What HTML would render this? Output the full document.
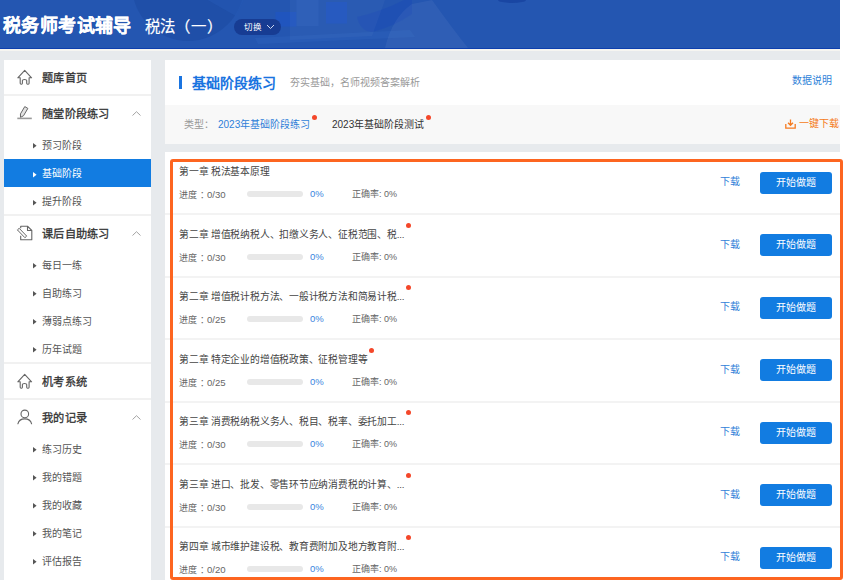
<!DOCTYPE html>
<html lang="zh-CN"><head><meta charset="utf-8">
<style>
*{margin:0;padding:0;box-sizing:border-box}
html,body{width:843px;height:580px;overflow:hidden;background:#fff}
body{font-family:"Liberation Sans",sans-serif;position:relative}
.abs{position:absolute}
#bg{position:absolute;left:0;top:0;width:840px;height:580px;background:#e7eaed}
#hdr{position:absolute;left:0;top:0;width:840px;height:49px;background:#2456b1;overflow:hidden}
#hdrline{position:absolute;left:0;top:48px;width:840px;height:1px;background:#0d3fae}
#hdrcream{position:absolute;left:0;top:49px;width:840px;height:2px;background:#f6f5f1}
.t{position:absolute;white-space:nowrap;line-height:1}
#side{position:absolute;left:4px;top:60px;width:147px;height:520px;background:#fff}
.div{position:absolute;left:0;width:147px;height:2px;background:#f1f1f1}
.mi{position:absolute;left:38px;font-size:11.2px;letter-spacing:0.3px;color:#333;line-height:1;-webkit-text-stroke:0.3px #333}
.si{position:absolute;left:38px;font-size:10px;color:#555;line-height:1;margin-top:0.6px}
.tri{position:absolute;left:28.8px;width:4px;height:6px}
.chev{position:absolute;left:128px;width:9px;height:5px}
#sel{position:absolute;left:0;top:99px;width:147px;height:28px;background:#127ce1}
#panel{position:absolute;left:165px;top:60px;width:678px;height:45px;background:#fff}
#typ{position:absolute;left:165px;top:105px;width:675px;height:39px;background:#f8f8f8}
#list{position:absolute;left:165px;top:152px;width:678px;height:428px;background:#fff}
.row{position:absolute;left:0;width:675px;height:62.5px}
.rdiv{position:absolute;left:0;bottom:-0.5px;width:675px;height:2px;background:#f3f3f3}
.title{position:absolute;left:14px;top:15.2px;font-size:9.75px;letter-spacing:-0.22px;color:#444;line-height:1;white-space:nowrap}
.prog{position:absolute;left:14px;top:38px;font-size:9px;color:#666;line-height:1;white-space:nowrap}
.bar{position:absolute;left:82px;top:39px;width:56px;height:6px;border-radius:3px;background:#e8e8e8}
.pct{position:absolute;left:145px;top:37.2px;font-size:9.5px;color:#3b86e0;line-height:1}
.acc{position:absolute;left:187px;top:38px;font-size:9px;color:#666;line-height:1;white-space:nowrap}
.dl{position:absolute;left:555px;top:25.3px;font-size:10px;color:#2f7fd8;line-height:1}
.btn{position:absolute;left:595px;top:19.5px;width:72px;height:22px;border-radius:3px;background:#127ce1;color:#fff;font-size:10px;line-height:22px;text-align:center}
.dot{position:absolute;width:5px;height:5px;border-radius:50%;background:#f4472a}
#orange{position:absolute;left:170px;top:159px;width:673px;height:421px;border:3px solid #fd6520;border-radius:3px}
</style></head><body>
<div id="bg"></div>
<div id="hdr"><svg class="abs" style="left:0;top:0" width="840" height="48" viewBox="0 0 840 48">
<circle cx="188" cy="-15" r="56" fill="#1f4fa8"/>
<path d="M206 -1 L188 -15 L244 0 L236 16 Z" fill="#2458b4" opacity="0.6"/>
<rect x="275.5" y="12" width="21" height="14.5" fill="#1f55c2" opacity="0.8"/>
<rect x="296.5" y="0" width="22" height="26" fill="#2a5cb8" opacity="0.8"/>
<rect x="326" y="2" width="21" height="21.5" fill="#1f55c2" opacity="0.8"/>
<path d="M255 38 L410 30 L415 37 L258 44 Z" fill="#2b5eb8" opacity="0.7"/>
<path d="M357 17 Q380 12 404 0 L412 0 L412 14 Q395 26 372 32 Q360 31 357 17 Z" fill="#1f50b4" opacity="0.9"/>
<path d="M290 0 H385 L372 36 L290 40 Z" fill="#fff" opacity="0.03"/><path d="M385 48 Q392 18 412 4 L432 0 Q452 28 468 48 Z" fill="#fff" opacity="0.05"/><ellipse cx="512" cy="0" rx="14" ry="3" fill="#123c9a" opacity="0.6"/>
</svg></div>
<div id="hdrline"></div>
<div id="hdrcream"></div>
<div class="t" style="left:3px;top:17px;font-size:18px;letter-spacing:0.4px;font-weight:bold;color:#fff;-webkit-text-stroke:0.2px #fff">税务师考试辅导</div>
<div class="t" style="left:145px;top:18.5px;font-size:15.4px;color:#fff;-webkit-text-stroke:0.2px #fff">税法<span style="letter-spacing:1px">（一）</span></div>
<div class="abs" style="left:234px;top:18.5px;width:47px;height:16px;border-radius:8px;background:#173c93"></div>
<div class="t" style="left:244px;top:22.5px;font-size:8.5px;color:#fff">切换</div>
<svg class="abs" style="left:266px;top:24px" width="9" height="6" viewBox="0 0 9 6"><path d="M1 1 L4.5 4.5 L8 1" fill="none" stroke="#cfd8ee" stroke-width="1"/></svg>

<div id="side">
  <!-- 题库首页 row 60-95 -->
  <svg class="abs" style="left:12px;top:8px" width="18" height="18" viewBox="0 0 18 18"><path d="M4.2 15.3 V9.8 H1.8 L8.7 2.4 L15.6 9.8 H13.1 V15.3 Q13.1 16.2 12.2 16.2 H11.6 Q10.7 16.2 10.7 15.3 V12.6 Q10.7 11.5 8.55 11.5 Q6.4 11.5 6.4 12.6 V15.3 Q6.4 16.2 5.5 16.2 H5.1 Q4.2 16.2 4.2 15.3 Z" fill="none" stroke="#666" stroke-width="1.1" stroke-linejoin="round"/></svg>
  <div class="mi" style="top:13px">题库首页</div>
  <div class="div" style="top:34px"></div>
  <!-- 随堂阶段练习 96-131 -->
  <svg class="abs" style="left:12px;top:42px" width="18" height="18" viewBox="0 0 18 18"><path d="M8.75 4.6 L11.85 6.4 L7.55 13.7 L4.5 15.4 L4.45 11.9 Z" fill="#e2e2e2" stroke="#666" stroke-width="1" stroke-linejoin="round"/><path d="M1.3 16.4 H15.8" stroke="#9a9a9a" stroke-width="1.6"/></svg>
  <div class="mi" style="top:49px">随堂阶段练习</div>
  <svg class="chev" style="top:51px" viewBox="0 0 9 5"><path d="M0.5 4.5 L4.5 0.7 L8.5 4.5" fill="none" stroke="#999" stroke-width="0.9"/></svg>
  <svg class="tri" style="top:83px" viewBox="0 0 4 6"><path d="M0 0.1 L3.6 2.85 L0 5.6 Z" fill="#555"/></svg>
  <div class="si" style="top:80px">预习阶段</div>
  <div id="sel"></div>
  <svg class="tri" style="top:111.5px" viewBox="0 0 4 6"><path d="M0 0.1 L3.6 2.85 L0 5.6 Z" fill="#fff"/></svg>
  <div class="si" style="top:108.5px;color:#fff">基础阶段</div>
  <svg class="tri" style="top:139.5px" viewBox="0 0 4 6"><path d="M0 0.1 L3.6 2.85 L0 5.6 Z" fill="#555"/></svg>
  <div class="si" style="top:136.5px">提升阶段</div>
  <div class="div" style="top:154px"></div>
  <!-- 课后自助练习 216-251 -->
  <svg class="abs" style="left:12px;top:163px" width="18" height="18" viewBox="0 0 18 18"><path d="M4.7 5.2 V3.2 H11.5 L15.8 7.5 V16.8 H4.7 V12.7 M11.5 3.2 V7.5 H15.8" fill="none" stroke="#666" stroke-width="1.1" stroke-linejoin="round"/><path d="M3.2 5.3 L10.7 13.1 L8.9 14.7 L1.4 6.9 Z" fill="none" stroke="#666" stroke-width="1" stroke-linejoin="round"/></svg>
  <div class="mi" style="top:169px">课后自助练习</div>
  <svg class="chev" style="top:171px" viewBox="0 0 9 5"><path d="M0.5 4.5 L4.5 0.7 L8.5 4.5" fill="none" stroke="#999" stroke-width="0.9"/></svg>
  <svg class="tri" style="top:203px" viewBox="0 0 4 6"><path d="M0 0.1 L3.6 2.85 L0 5.6 Z" fill="#555"/></svg>
  <div class="si" style="top:200px">每日一练</div>
  <svg class="tri" style="top:231px" viewBox="0 0 4 6"><path d="M0 0.1 L3.6 2.85 L0 5.6 Z" fill="#555"/></svg>
  <div class="si" style="top:228px">自助练习</div>
  <svg class="tri" style="top:259px" viewBox="0 0 4 6"><path d="M0 0.1 L3.6 2.85 L0 5.6 Z" fill="#555"/></svg>
  <div class="si" style="top:256px">薄弱点练习</div>
  <svg class="tri" style="top:287px" viewBox="0 0 4 6"><path d="M0 0.1 L3.6 2.85 L0 5.6 Z" fill="#555"/></svg>
  <div class="si" style="top:284px">历年试题</div>
  <div class="div" style="top:302px"></div>
  <!-- 机考系统 364-399 -->
  <svg class="abs" style="left:12px;top:312px" width="18" height="18" viewBox="0 0 18 18"><path d="M4.2 15.3 V9.8 H1.8 L8.7 2.4 L15.6 9.8 H13.1 V15.3 Q13.1 16.2 12.2 16.2 H11.6 Q10.7 16.2 10.7 15.3 V12.6 Q10.7 11.5 8.55 11.5 Q6.4 11.5 6.4 12.6 V15.3 Q6.4 16.2 5.5 16.2 H5.1 Q4.2 16.2 4.2 15.3 Z" fill="none" stroke="#666" stroke-width="1.1" stroke-linejoin="round"/></svg>
  <div class="mi" style="top:317px">机考系统</div>
  <div class="div" style="top:338px"></div>
  <!-- 我的记录 400-435 -->
  <svg class="abs" style="left:12px;top:347px" width="18" height="18" viewBox="0 0 18 18"><circle cx="8.8" cy="6.9" r="3.8" fill="none" stroke="#666" stroke-width="1.1"/><path d="M1.9 16.8 A7 6.2 0 0 1 15.6 16.8" fill="none" stroke="#666" stroke-width="1.1" stroke-linecap="round"/></svg>
  <div class="mi" style="top:353px">我的记录</div>
  <svg class="chev" style="top:355px" viewBox="0 0 9 5"><path d="M0.5 4.5 L4.5 0.7 L8.5 4.5" fill="none" stroke="#999" stroke-width="0.9"/></svg>
  <svg class="tri" style="top:387px" viewBox="0 0 4 6"><path d="M0 0.1 L3.6 2.85 L0 5.6 Z" fill="#555"/></svg>
  <div class="si" style="top:384px">练习历史</div>
  <svg class="tri" style="top:415px" viewBox="0 0 4 6"><path d="M0 0.1 L3.6 2.85 L0 5.6 Z" fill="#555"/></svg>
  <div class="si" style="top:412px">我的错题</div>
  <svg class="tri" style="top:443px" viewBox="0 0 4 6"><path d="M0 0.1 L3.6 2.85 L0 5.6 Z" fill="#555"/></svg>
  <div class="si" style="top:440px">我的收藏</div>
  <svg class="tri" style="top:471px" viewBox="0 0 4 6"><path d="M0 0.1 L3.6 2.85 L0 5.6 Z" fill="#555"/></svg>
  <div class="si" style="top:468px">我的笔记</div>
  <svg class="tri" style="top:499px" viewBox="0 0 4 6"><path d="M0 0.1 L3.6 2.85 L0 5.6 Z" fill="#555"/></svg>
  <div class="si" style="top:496px">评估报告</div>
</div>

<div id="panel">
  <div class="abs" style="left:14px;top:16px;width:3px;height:13px;background:#1a74e0"></div>
  <div class="t" style="left:27px;top:15.5px;font-size:14px;font-weight:bold;color:#1a74e0">基础阶段练习</div>
  <div class="t" style="left:125px;top:17.5px;font-size:10px;color:#999">夯实基础，名师视频答案解析</div>
  <div class="t" style="left:627px;top:16px;font-size:10px;color:#2f7fd8">数据说明</div>
</div>
<div id="typ">
  <div class="t" style="left:19px;top:15px;font-size:10px;color:#999">类型：</div>
  <div class="t" style="left:53px;top:15px;font-size:10px;color:#2f7fd8">2023年基础阶段练习</div>
  <div class="dot" style="left:146.7px;top:10.2px"></div>
  <div class="t" style="left:167px;top:15px;font-size:10px;color:#333">2023年基础阶段测试</div>
  <div class="dot" style="left:260.5px;top:10.2px"></div>
  <svg class="abs" style="left:620px;top:14px" width="11" height="10" viewBox="0 0 11 10"><path d="M5.5 0.5 V6 M3 3.8 L5.5 6.3 L8 3.8 M0.8 5 V9.2 H10.2 V5" fill="none" stroke="#f57b20" stroke-width="1.3"/></svg>
  <div class="t" style="left:634px;top:14px;font-size:10px;color:#f57b20">一键下载</div>
</div>

<div id="list">
  <div class="row" style="top:0">
    <div class="title">第一章 税法基本原理</div>
    <div class="prog">进度<span style="position:relative;left:3px">：</span><span style="font-size:9.6px;margin-left:1px">0/30</span></div><div class="bar"></div><div class="pct">0%</div><div class="acc">正确率: 0%</div>
    <div class="dl">下载</div><div class="btn">开始做题</div><div class="rdiv"></div>
  </div>
  <div class="row" style="top:62.5px">
    <div class="title">第二章 增值税纳税人、扣缴义务人、征税范围、税...</div><div class="dot" style="left:241.3px;top:8.2px"></div>
    <div class="prog">进度<span style="position:relative;left:3px">：</span><span style="font-size:9.6px;margin-left:1px">0/30</span></div><div class="bar"></div><div class="pct">0%</div><div class="acc">正确率: 0%</div>
    <div class="dl">下载</div><div class="btn">开始做题</div><div class="rdiv"></div>
  </div>
  <div class="row" style="top:125px">
    <div class="title">第二章 增值税计税方法、一般计税方法和简易计税...</div><div class="dot" style="left:241.3px;top:8.2px"></div>
    <div class="prog">进度<span style="position:relative;left:3px">：</span><span style="font-size:9.6px;margin-left:1px">0/25</span></div><div class="bar"></div><div class="pct">0%</div><div class="acc">正确率: 0%</div>
    <div class="dl">下载</div><div class="btn">开始做题</div><div class="rdiv"></div>
  </div>
  <div class="row" style="top:187.5px">
    <div class="title">第二章 特定企业的增值税政策、征税管理等</div><div class="dot" style="left:203.7px;top:8.4px"></div>
    <div class="prog">进度<span style="position:relative;left:3px">：</span><span style="font-size:9.6px;margin-left:1px">0/25</span></div><div class="bar"></div><div class="pct">0%</div><div class="acc">正确率: 0%</div>
    <div class="dl">下载</div><div class="btn">开始做题</div><div class="rdiv"></div>
  </div>
  <div class="row" style="top:250px">
    <div class="title">第三章 消费税纳税义务人、税目、税率、委托加工...</div><div class="dot" style="left:241.3px;top:8.2px"></div>
    <div class="prog">进度<span style="position:relative;left:3px">：</span><span style="font-size:9.6px;margin-left:1px">0/30</span></div><div class="bar"></div><div class="pct">0%</div><div class="acc">正确率: 0%</div>
    <div class="dl">下载</div><div class="btn">开始做题</div><div class="rdiv"></div>
  </div>
  <div class="row" style="top:312.5px">
    <div class="title">第三章 进口、批发、零售环节应纳消费税的计算、...</div><div class="dot" style="left:241.3px;top:8.2px"></div>
    <div class="prog">进度<span style="position:relative;left:3px">：</span><span style="font-size:9.6px;margin-left:1px">0/30</span></div><div class="bar"></div><div class="pct">0%</div><div class="acc">正确率: 0%</div>
    <div class="dl">下载</div><div class="btn">开始做题</div><div class="rdiv"></div>
  </div>
  <div class="row" style="top:375px">
    <div class="title">第四章 城市维护建设税、教育费附加及地方教育附...</div><div class="dot" style="left:241.3px;top:8.2px"></div>
    <div class="prog">进度<span style="position:relative;left:3px">：</span><span style="font-size:9.6px;margin-left:1px">0/20</span></div><div class="bar"></div><div class="pct">0%</div><div class="acc">正确率: 0%</div>
    <div class="dl">下载</div><div class="btn">开始做题</div><div class="rdiv"></div>
  </div>
</div>
<div id="orange"></div>
</body></html>
